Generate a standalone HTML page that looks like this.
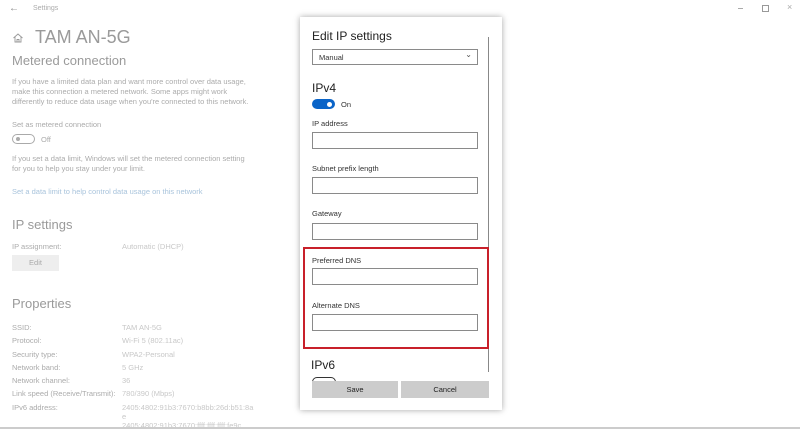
<!DOCTYPE html><html><head><style>
body{margin:0;width:800px;height:429px;background:#fff;position:relative;overflow:hidden;font-family:"Liberation Sans",sans-serif}
.a{position:absolute;white-space:nowrap}
.g{color:#ababab;font-size:7.5px}
.v{color:#c8c8c8;font-size:7.5px}
.h{color:#8a8a8a}
.d{color:#333;font-size:7.5px}
.in{position:absolute;left:312px;width:164px;height:15px;border:1px solid #8a8a8a;background:#fff}
</style></head><body>
<div class="a" style="left:9px;top:3px;color:#888;font-size:10px">&#8592;</div>
<div class="a g" style="left:33px;top:5px;font-size:7px">Settings</div>
<svg class="a" style="left:12px;top:32px" width="12" height="12" viewBox="0 0 12 12"><path d="M1.5 6L6 2l4.5 4M3 5v5h6V5M5 10V7.5h2V10" fill="none" stroke="#999" stroke-width="0.9"/></svg>
<div class="a h" style="left:35px;top:27px;font-size:18px;color:#9a9a9a">TAM AN-5G</div>
<div class="a h" style="left:12px;top:53px;font-size:13px;color:#9a9a9a">Metered connection</div>
<div class="a g" style="left:12px;top:77px;line-height:10px">If you have a limited data plan and want more control over data usage,<br>make this connection a metered network. Some apps might work<br>differently to reduce data usage when you're connected to this network.</div>
<div class="a g" style="left:12px;top:120px">Set as metered connection</div>
<div class="a" style="left:12px;top:134px;width:21px;height:8px;border:1px solid #aaa;border-radius:6px"><div style="position:absolute;left:3px;top:2px;width:4px;height:4px;border-radius:50%;background:#aaa"></div></div>
<div class="a g" style="left:41px;top:135px">Off</div>
<div class="a g" style="left:12px;top:154px;line-height:10px">If you set a data limit, Windows will set the metered connection setting<br>for you to help you stay under your limit.</div>
<div class="a" style="left:12px;top:187px;font-size:7.5px;color:#a9c4dc">Set a data limit to help control data usage on this network</div>
<div class="a h" style="left:12px;top:217px;font-size:13px;color:#9a9a9a">IP settings</div>
<div class="a g" style="left:12px;top:242px">IP assignment:</div>
<div class="a v" style="left:122px;top:242px">Automatic (DHCP)</div>
<div class="a" style="left:12px;top:255px;width:47px;height:16px;background:#eee;color:#aaa;font-size:7.5px;text-align:center;line-height:16px">Edit</div>
<div class="a h" style="left:12px;top:296px;font-size:13px;color:#9a9a9a">Properties</div>
<div class="a g" style="left:12px;top:321px;line-height:13.3px">SSID:<br>Protocol:<br>Security type:<br>Network band:<br>Network channel:<br>Link speed (Receive/Transmit):<br>IPv6 address:</div>
<div class="a v" style="left:122px;top:321px;line-height:13.3px">TAM AN-5G<br>Wi-Fi 5 (802.11ac)<br>WPA2-Personal<br>5 GHz<br>36<br>780/390 (Mbps)<br>2405:4802:91b3:7670:b8bb:26d:b51:8a</div>
<div class="a v" style="left:122px;top:412px;line-height:9px">e<br>2405:4802:91b3:7670:ffff:ffff:ffff:fe9c</div>
<div class="a" style="left:0;top:427px;width:800px;height:2px;background:#ccc"></div>
<div class="a" style="left:738px;top:8px;width:5px;height:1px;background:#aaa"></div>
<div class="a" style="left:762px;top:5px;width:5px;height:5px;border:1px solid #999"></div>
<div class="a" style="left:787px;top:2px;color:#aaa;font-size:9px">&#215;</div>
<!-- dialog -->
<div class="a" style="left:300px;top:17px;width:202px;height:393px;background:#fff;box-shadow:0 0 6px rgba(0,0,0,.35)"></div>
<div class="a" style="left:488px;top:37px;width:1px;height:335px;background:#888"></div>
<div class="a" style="left:312px;top:29px;font-size:12px;color:#222">Edit IP settings</div>
<div class="in" style="top:49px;height:14px"><span class="a d" style="left:6px;top:3px">Manual</span><span class="a" style="right:5px;top:0;font-size:8px;color:#555">&#8964;</span></div>
<div class="a" style="left:312px;top:81px;font-size:12px;color:#222">IPv4</div>
<div class="a" style="left:312px;top:99px;width:23px;height:10px;background:#0a64c8;border-radius:5px"><div style="position:absolute;right:3px;top:2.5px;width:5px;height:5px;border-radius:50%;background:#fff"></div></div>
<div class="a d" style="left:341px;top:100px">On</div>
<div class="a d" style="left:312px;top:119px">IP address</div><div class="in" style="top:132px"></div>
<div class="a d" style="left:312px;top:164px">Subnet prefix length</div><div class="in" style="top:177px"></div>
<div class="a d" style="left:312px;top:209px">Gateway</div><div class="in" style="top:223px"></div>
<div class="a" style="left:303px;top:247px;width:182px;height:98px;border:2px solid #c8202a;background:transparent"></div>
<div class="a d" style="left:312px;top:256px">Preferred DNS</div><div class="in" style="top:268px"></div>
<div class="a d" style="left:312px;top:301px">Alternate DNS</div><div class="in" style="top:314px"></div>
<div class="a" style="left:311px;top:358px;font-size:12px;color:#222">IPv6</div>
<div class="a" style="left:312px;top:377px;width:22px;height:8px;border:1px solid #333;border-radius:5px"></div>
<div class="a" style="left:312px;top:381px;width:86px;height:17px;background:#ccc;font-size:7.5px;color:#222;text-align:center;line-height:17px">Save</div>
<div class="a" style="left:401px;top:381px;width:88px;height:17px;background:#ccc;font-size:7.5px;color:#222;text-align:center;line-height:17px">Cancel</div>
</body></html>
